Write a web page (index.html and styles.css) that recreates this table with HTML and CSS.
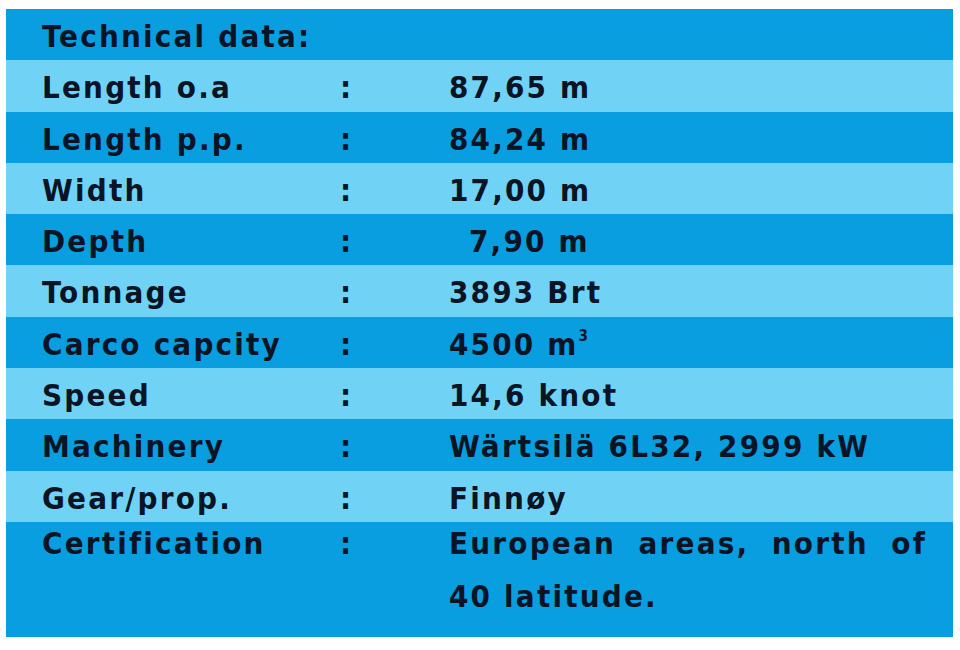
FILE: index.html
```html
<!DOCTYPE html>
<html lang="en">
<head>
  <meta charset="UTF-8" />
  <title>Technical data</title>
  <link rel="stylesheet" href="styles.css">
</head>
<body>
  <div class="specs">
    <div class="row dark">
      <div class="label">Technical data:</div>
    </div>
    <div class="row light">
      <div class="label">Length o.a</div><div class="colon">:</div><div class="value">87,65 m</div>
    </div>
    <div class="row dark">
      <div class="label">Length p.p.</div><div class="colon">:</div><div class="value">84,24 m</div>
    </div>
    <div class="row light">
      <div class="label">Width</div><div class="colon">:</div><div class="value">17,00 m</div>
    </div>
    <div class="row dark">
      <div class="label">Depth</div><div class="colon">:</div><div class="value indent">7,90 m</div>
    </div>
    <div class="row light">
      <div class="label">Tonnage</div><div class="colon">:</div><div class="value">3893 Brt</div>
    </div>
    <div class="row dark">
      <div class="label">Carco capcity</div><div class="colon">:</div><div class="value">4500 m<sup>3</sup></div>
    </div>
    <div class="row light">
      <div class="label">Speed</div><div class="colon">:</div><div class="value">14,6 knot</div>
    </div>
    <div class="row dark">
      <div class="label">Machinery</div><div class="colon">:</div><div class="value">Wärtsilä 6L32, 2999 kW</div>
    </div>
    <div class="row light">
      <div class="label">Gear/prop.</div><div class="colon">:</div><div class="value">Finnøy</div>
    </div>
    <div class="row dark last">
      <div class="label">Certification</div><div class="colon">:</div><div class="value">European areas, north of 40 latitude.</div>
    </div>
  </div>
</body>
</html>
```

FILE: styles.css
```css
body {
  margin: 0;
  background: #fff;
  font-family: "DejaVu Sans Condensed", "DejaVu Sans", sans-serif;
  font-weight: bold;
  color: #0a1424;
}

.specs {
  margin: 9px 7px 0 6px;
  width: 947px;
}

.row {
  display: grid;
  grid-template-columns: 298px 109px 1fr;
  height: 51.3px;
  padding: 0 26px 0 36px;
  font-size: 31px;
  line-height: 54px;
  letter-spacing: 2.2px;
}

.dark {
  background: #099ee0;
}

.light {
  background: #70d3f5;
}

.value.indent {
  padding-left: 20px;
}

.value sup {
  font-size: 15px;
  line-height: 0;
  vertical-align: 14px;
}

.row.last {
  height: 115px;
  line-height: 53px;
}

.row.last > div {
  margin-top: -5px;
}

.row.last .value {
  text-align: justify;
}
```
